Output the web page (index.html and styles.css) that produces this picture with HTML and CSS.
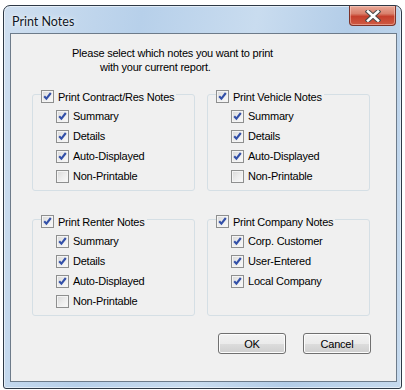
FILE: index.html
```html
<!DOCTYPE html>
<html>
<head>
<meta charset="utf-8">
<link rel="stylesheet" href="styles.css">
</head>
<body>
<div class="window">
  <div class="titlebar">
    <span class="title">Print Notes</span>
    <div class="close">
      <svg width="16" height="12" viewBox="0 0 16 12">
        <path d="M3 1.5 L13 10.5 M13 1.5 L3 10.5" stroke="#4a4a4a" stroke-width="4.6" stroke-linecap="square"/>
        <path d="M3 1.5 L13 10.5 M13 1.5 L3 10.5" stroke="#ffffff" stroke-width="2.6" stroke-linecap="square"/>
      </svg>
    </div>
  </div>
  <div class="client">
    <p class="intro">Please select which notes you want to print<br><span class="l2">with your current report.</span></p>
    <div class="groups">
      <div class="group">
        <div class="head"><span class="cb on"></span><span class="lbl">Print Contract/Res Notes</span></div>
        <div class="items">
          <div class="item"><span class="cb on"></span>Summary</div>
          <div class="item"><span class="cb on"></span>Details</div>
          <div class="item"><span class="cb on"></span>Auto-Displayed</div>
          <div class="item"><span class="cb"></span>Non-Printable</div>
        </div>
      </div>
      <div class="group">
        <div class="head"><span class="cb on"></span><span class="lbl">Print Vehicle Notes</span></div>
        <div class="items">
          <div class="item"><span class="cb on"></span>Summary</div>
          <div class="item"><span class="cb on"></span>Details</div>
          <div class="item"><span class="cb on"></span>Auto-Displayed</div>
          <div class="item"><span class="cb"></span>Non-Printable</div>
        </div>
      </div>
      <div class="group">
        <div class="head"><span class="cb on"></span><span class="lbl">Print Renter Notes</span></div>
        <div class="items">
          <div class="item"><span class="cb on"></span>Summary</div>
          <div class="item"><span class="cb on"></span>Details</div>
          <div class="item"><span class="cb on"></span>Auto-Displayed</div>
          <div class="item"><span class="cb"></span>Non-Printable</div>
        </div>
      </div>
      <div class="group">
        <div class="head"><span class="cb on"></span><span class="lbl">Print Company Notes</span></div>
        <div class="items">
          <div class="item"><span class="cb on"></span>Corp. Customer</div>
          <div class="item"><span class="cb on"></span>User-Entered</div>
          <div class="item"><span class="cb on"></span>Local Company</div>
        </div>
      </div>
    </div>
    <div class="buttons">
      <button class="btn">OK</button>
      <button class="btn">Cancel</button>
    </div>
  </div>
</div>
</body>
</html>
```
FILE: styles.css
```css
* { box-sizing: border-box; }
html, body { margin: 0; padding: 0; background: #ffffff; }
body { padding: 5px 0 0 3px; font-family: "Liberation Sans", Arial, sans-serif; font-size: 11px; letter-spacing: -0.22px; color: #000; }

.window {
  width: 399px;
  height: 384px;
  border: 1px solid #2e3946;
  border-radius: 7px 7px 3px 3px;
  padding: 0 3px 0 6px;
  background: linear-gradient(100deg, #cfdff0 0%, #b7d0ea 30%, #c9dcef 55%, #b3cde8 75%, #c6daee 100%);
  box-shadow: inset 0 0 0 1px rgba(255,255,255,0.55);
}

.titlebar {
  height: 27px;
  display: flex;
  align-items: flex-start;
  justify-content: space-between;
}
.title {
  font-family: Lato, "Noto Sans", sans-serif;
  font-size: 12.5px;
  letter-spacing: 0;
  margin: 8px 0 0 2px;
  color: #0e1626;
  text-shadow: 0 0 6px rgba(255,255,255,0.9), 0 0 2px rgba(255,255,255,0.9);
}
.close {
  width: 47px;
  height: 20px;
  margin-right: 2px;
  border: 1px solid #7d3329;
  border-top: none;
  border-radius: 0 0 4px 4px;
  background: linear-gradient(#e9a998 0%, #d9806c 40%, #c53f2c 55%, #cf5a43 100%);
  box-shadow: inset 0 0 0 1px rgba(255,220,210,0.45);
  display: flex;
  align-items: center;
  justify-content: center;
}

.client {
  width: 387px;
  height: 349px;
  border: 1px solid #6d7b8a;
  background: #f0f0f0;
  padding: 0 0 0 21px;
}

.intro {
  margin: 12px 0 0 40px;
  line-height: 14px;
}
.l2 { padding-left: 28px; }

.groups {
  margin-top: 20px;
  display: grid;
  grid-template-columns: 163px 163px;
  grid-template-rows: 97px 97px;
  column-gap: 12px;
  row-gap: 28px;
}
.group {
  border: 1px solid #d5dfe5;
  border-radius: 3px;
  padding: 0 0 0 8px;
}
.head {
  display: flex;
  align-items: center;
  height: 13px;
  margin-top: -5px;
  width: max-content;
  background: #f0f0f0;
  padding-right: 2px;
}
.lbl { margin-left: 4px; }
.items {
  margin-top: 3px;
  padding-left: 15px;
}
.item {
  height: 20px;
  display: flex;
  align-items: center;
}
.item .cb { margin-right: 4px; }

.cb {
  width: 13px;
  height: 13px;
  flex: none;
  border: 1px solid #8e8f8f;
  background: linear-gradient(135deg, #d8d8d8 0%, #ececec 50%, #fafafa 100%);
  box-shadow: inset 0 0 0 1px #f4f4f4;
}
.cb.on {
  background-image: url("data:image/svg+xml;utf8,<svg xmlns='http://www.w3.org/2000/svg' width='11' height='11' viewBox='0 0 11 11'><path d='M2.2 5.2 L4.4 7.6 L8.8 2' fill='none' stroke='%233350a8' stroke-width='2.1'/></svg>"), linear-gradient(135deg, #d8d8d8 0%, #ececec 50%, #fafafa 100%);
  background-repeat: no-repeat;
  background-position: center;
}

.buttons {
  display: flex;
  justify-content: flex-end;
  gap: 17px;
  margin-top: 17px;
  padding-right: 25px;
}
.btn {
  width: 68px;
  height: 21px;
  border: 1px solid #707070;
  border-radius: 3px;
  background: linear-gradient(#f2f2f2 0%, #ebebeb 50%, #dddddd 51%, #cfcfcf 100%);
  box-shadow: inset 0 0 0 1px #fcfcfc;
  font-family: "Liberation Sans", Arial, sans-serif;
  font-size: 11px;
  letter-spacing: -0.22px;
  color: #000;
  padding: 0;
}
```
